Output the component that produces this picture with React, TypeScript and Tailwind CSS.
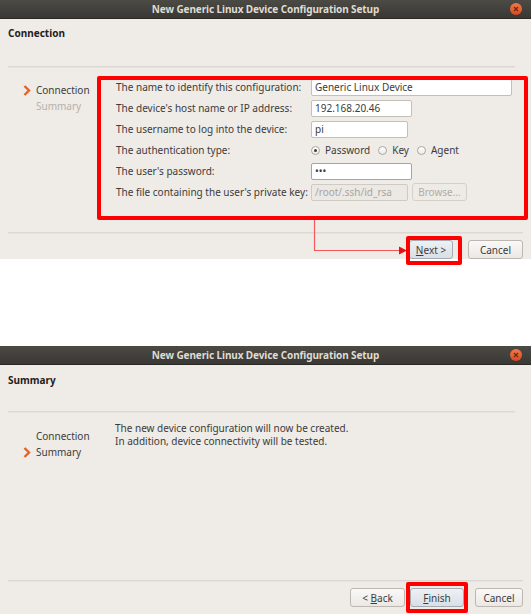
import React from "react";

const font = { fontFamily: '"Noto Sans", "Open Sans", sans-serif' };

function TitleBar() {
  return (
    <div className="relative h-[19px] shrink-0 bg-gradient-to-b from-[#4b4a45] to-[#393834] border-b border-[#2a2926] flex items-center justify-center">
      <span className="text-[10px] font-bold text-[#dfdbd2] tracking-[-0.1px]">New Generic Linux Device Configuration Setup</span>
      <div className="absolute right-[9px] top-[3px] w-[12px] h-[12px] rounded-full bg-gradient-to-b from-[#f37a4a] to-[#d9481c] flex items-center justify-center">
        <svg width="6" height="6" viewBox="0 0 6 6">
          <path d="M1 1 L5 5 M5 1 L1 5" stroke="#6a2a10" strokeWidth="1.2" />
        </svg>
      </div>
    </div>
  );
}

function Chevron() {
  return (
    <svg width="8" height="11" viewBox="0 0 8 11" className="shrink-0">
      <path d="M1.5 1 L6 5.5 L1.5 10" fill="none" stroke="#e2622a" strokeWidth="2.4" />
    </svg>
  );
}

function NavItem({ label, active, dim }: { label: string; active?: boolean; dim?: boolean }) {
  return (
    <div className="flex items-center h-[16px]">
      <div className="w-[13px] flex items-center">{active ? <Chevron /> : null}</div>
      <span className={dim ? "text-[#b5b1ab]" : "text-[#3c3c3c]"}>{label}</span>
    </div>
  );
}

function Btn({ children, primary, w }: { children: React.ReactNode; primary?: boolean; w: string }) {
  return (
    <div
      className={`${w} h-[19px] rounded-[3px] border flex items-center justify-center text-[#3c3c3c] ${
        primary
          ? "border-[#a5abb3] bg-gradient-to-b from-[#eef1f4] to-[#d9dfe6]"
          : "border-[#bcb7b0] bg-gradient-to-b from-[#faf9f8] to-[#ebe8e4]"
      }`}
    >
      {children}
    </div>
  );
}

function Input({ w, value, focus, disabled }: { w: string; value: string; focus?: boolean; disabled?: boolean }) {
  return (
    <div
      className={`${w} h-[17px] rounded-[2px] border flex items-center px-[3px] ${
        focus
          ? "border-[#86a9d6] bg-white text-[#3c3c3c]"
          : disabled
          ? "border-[#cfcac4] bg-[#ece9e5] text-[#a8a49e]"
          : "border-[#c4bfb8] bg-white text-[#3c3c3c]"
      }`}
    >
      {value}
    </div>
  );
}

function Radio({ on, label }: { on?: boolean; label: string }) {
  return (
    <div className="flex items-center gap-[5px]">
      <div className="w-[9px] h-[9px] rounded-full border border-[#aaa59e] bg-gradient-to-b from-white to-[#ecebe9] flex items-center justify-center">
        {on ? <div className="w-[3px] h-[3px] rounded-full bg-[#3c3c3c]" /> : null}
      </div>
      <span>{label}</span>
    </div>
  );
}

function Sep({ right }: { right: string }) {
  return <div className={`h-[2px] ml-[8px] ${right} bg-[#dcd8d3] border-b border-[#e6e3df] shrink-0`} />;
}

export default function App() {
  const rows: [string, React.ReactNode][] = [
    ["The name to identify this configuration:", <Input w="w-[201px]" value="Generic Linux Device" />],
    ["The device's host name or IP address:", <Input w="w-[101px]" value="192.168.20.46" />],
    ["The username to log into the device:", <Input w="w-[97px]" value="pi" />],
    [
      "The authentication type:",
      <div className="flex items-center gap-[8px]">
        <Radio on label="Password" />
        <Radio label="Key" />
        <Radio label="Agent" />
      </div>,
    ],
    ["The user's password:", <Input w="w-[101px]" value="•••" focus />],
    [
      "The file containing the user's private key:",
      <div className="flex items-center gap-[4px]">
        <Input w="w-[97px]" value="/root/.ssh/id_rsa" disabled />
        <div className="w-[55px] h-[18px] rounded-[3px] border border-[#d3cfc9] bg-[#eeebe7] text-[#b0aca6] flex items-center justify-center">
          Browse...
        </div>
      </div>,
    ],
  ];

  return (
    <div className="w-[531px] h-[614px] bg-white flex flex-col text-[10px] leading-[14px]" style={font}>
      {/* Dialog 1 */}
      <div className="relative h-[259px] bg-[#efebe7] flex flex-col shrink-0">
        <TitleBar />
        <div className="h-[47px] shrink-0 pl-[8px] pt-[7px] font-bold text-[#1e1e1e]">Connection</div>
        <Sep right="mr-[16px]" />
        <div className="flex-1 flex">
          <div className="w-[116px] pl-[23px] pt-[14px] flex flex-col">
            <NavItem label="Connection" active />
            <NavItem label="Summary" dim />
          </div>
          <div className="pt-[10px] flex flex-col gap-[3px] text-[#3c3c3c]">
            {rows.map(([l, c], i) => (
              <div key={i} className="flex items-center h-[18px]">
                <div className="w-[195px] whitespace-nowrap">{l}</div>
                {c}
              </div>
            ))}
          </div>
        </div>
        <Sep right="mr-[8px]" />
        <div className="h-[25px] shrink-0 flex items-start justify-end pt-[6px] pr-[8px] gap-[15px]">
          <Btn w="w-[44px]" primary>
            <span><span className="underline">N</span>ext &gt;</span>
          </Btn>
          <Btn w="w-[55px]">Cancel</Btn>
        </div>

        {/* annotations */}
        <div className="absolute left-[97px] top-[76px] w-[431px] h-[144px] border-[4px] border-[#ff0000] rounded-[2px]" />
        <div className="absolute left-[406px] top-[236px] w-[56px] h-[29px] border-[4px] border-[#ff0000] rounded-[2px] z-10" />
        <svg className="absolute left-[312px] top-[220px]" width="96" height="36" viewBox="0 0 96 36">
          <path d="M2.5 0 V30.5 H88" fill="none" stroke="#f05a5a" strokeWidth="1.2" />
          <path d="M87 26.5 L95 30.5 L87 34.5 Z" fill="#e81010" />
        </svg>
      </div>

      <div className="h-[87px] shrink-0" />

      {/* Dialog 2 */}
      <div className="relative flex-1 bg-[#efebe7] flex flex-col">
        <TitleBar />
        <div className="h-[46px] shrink-0 pl-[8px] pt-[8px] font-bold text-[#1e1e1e]">Summary</div>
        <Sep right="mr-[16px]" />
        <div className="flex-1 flex">
          <div className="w-[115px] pl-[23px] pt-[15px] flex flex-col">
            <NavItem label="Connection" />
            <NavItem label="Summary" active />
          </div>
          <div className="pt-[9px] text-[#3c3c3c] leading-[13px]">
            <div>The new device configuration will now be created.</div>
            <div>In addition, device connectivity will be tested.</div>
          </div>
        </div>
        <Sep right="mr-[8px]" />
        <div className="h-[32px] shrink-0 flex items-start justify-end pt-[6px] pr-[8px]">
          <Btn w="w-[55px]">
            <span>&lt; <span className="underline">B</span>ack</span>
          </Btn>
          <div className="w-[5px]" />
          <Btn w="w-[54px]" primary>
            <span><span className="underline">F</span>inish</span>
          </Btn>
          <div className="w-[11px]" />
          <Btn w="w-[48px]">Cancel</Btn>
        </div>
        <div className="absolute left-[406px] top-[236px] w-[62px] h-[31px] border-[4px] border-[#ff0000] rounded-[2px]" />
      </div>
    </div>
  );
}
